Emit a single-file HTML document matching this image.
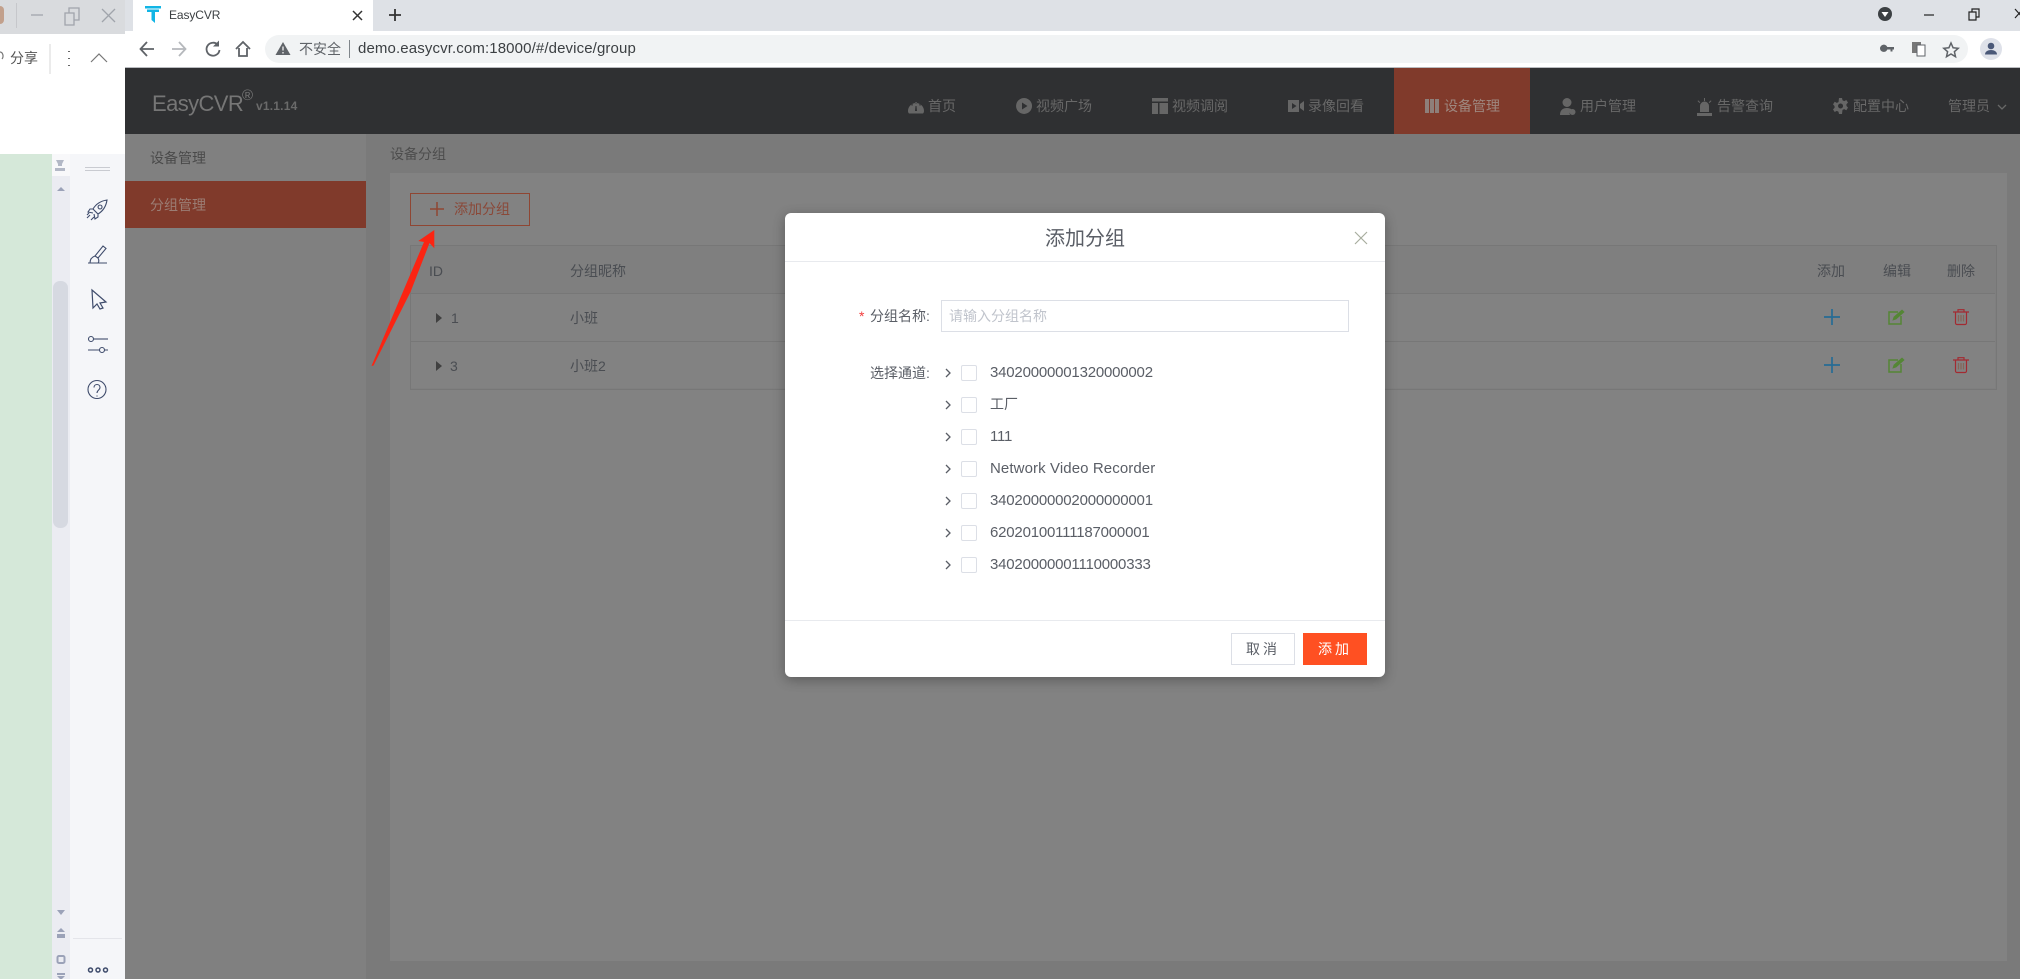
<!DOCTYPE html>
<html lang="zh"><head><meta charset="utf-8"><title>EasyCVR</title>
<style>
html,body{margin:0;padding:0;width:2020px;height:979px;overflow:hidden;background:#7a7a7a}
body{position:relative;font-family:"Liberation Sans","Noto Sans CJK SC",sans-serif;font-size:14px}
.b,.t,svg{position:absolute}
.t{white-space:nowrap;line-height:20px}
svg{overflow:visible}
.nav{color:#686868;font-size:14px;top:96px}
.ni{fill:#666;top:98px}
.tb{color:#4a4d52;font-size:14px}
.lab{color:#5a5e66;font-size:14px}
.item{color:#5a5e66;font-size:15px;left:990px;letter-spacing:-.2px}
.cb{position:absolute;left:961px;width:14px;height:14px;border:1px solid #dcdfe6;border-radius:2px;background:#fff}
.ch{left:944px;fill:none;stroke:#5a5e66;stroke-width:1.3}
</style></head><body>

<!-- left background window -->
<div class="b" style="left:0;top:0;width:125px;height:154px;background:#fff"></div>
<div class="b" style="left:0;top:0;width:133px;height:34px;background:#d9dbde;border-radius:0 0 8px 0"></div>
<div class="b" style="left:0;top:154px;width:52px;height:825px;background:#d5e8d9"></div>
<div class="b" style="left:52px;top:154px;width:18px;height:825px;background:#ebecf2"></div>
<div class="b" style="left:52px;top:154px;width:18px;height:22px;background:#f8f8fa"></div>
<div class="b" style="left:70px;top:154px;width:55px;height:825px;background:#f5f6f9"></div>
<div class="b" style="left:53px;top:281px;width:15px;height:247px;background:#d6d9e1;border-radius:7px"></div>
<div class="b" style="left:0;top:6px;width:4px;height:18px;background:#c2a08c;border-radius:0 4px 4px 0"></div>
<div class="b" style="left:16px;top:3px;width:1px;height:25px;background:#c6c7cb"></div>
<svg style="left:0;top:0" width="133" height="34" fill="none" stroke="#a0a4ab" stroke-width="1.3"><path d="M31 15h12M65 13h9v12h-9zM69 13V8h10v12h-5M102 9l13 13M115 9l-13 13"/></svg>
<div class="t" style="left:10px;top:48px;color:#555;font-size:14px">分享</div>
<svg style="left:0;top:48px" width="125" height="24" fill="none" stroke="#777" stroke-width="1.2"><path d="M0 4a3 4 0 0 1 2 7"/><path d="M50 -4v30" stroke="#ddd"/><path d="M69 3v1M69 10v1M69 17v1" stroke="#666" stroke-width="2"/><path d="M91 14l8-8 8 8"/></svg>

<!-- scroll strip and tool icons -->
<svg style="left:52px;top:154px" width="18" height="36"><path d="M4 6h8l-2 4h-4z M6 10h4v2H6z M3 14h10v3H3z" fill="#b3b8c6"/><path d="M5 37l4-4 4 4z" fill="#9ba2b8"/></svg>
<svg style="left:80px;top:166px" width="36" height="6" stroke="#c9cbd1" stroke-width="1"><path d="M5 1.500h25M5 4.500h25"/></svg>
<svg style="left:87px;top:199px" width="21" height="21" fill="none" stroke="#3f4c6c" stroke-width="1.100"><path d="M6 10c3-5 7-8 14-9-1 7-4 11-9 14zM6 10H3l-2 3 5 1M11 15v3l-3 2-1-5M13 6a2 2 0 1 0 .1 0M0 19l3-3M4 21l3-3M0 16l2-2"/></svg>
<svg style="left:88px;top:245px" width="19" height="19" fill="none" stroke="#3f4c6c" stroke-width="1.100"><path d="M7 11L15 1l3 2.500L10 13zM7 11c-3 1-5 3-5 7h8c1-1 1-3 0-5M0 18h19"/></svg>
<svg style="left:91px;top:289px" width="16" height="20" fill="none" stroke="#3f4c6c" stroke-width="1.200"><path d="M1 1l14 12-6 1 3 5-3 1-3-5-4 4z"/></svg>
<svg style="left:87px;top:335px" width="21" height="18" fill="none" stroke="#3f4c6c" stroke-width="1.100"><circle cx="4" cy="4" r="2.500"/><path d="M7 4h14"/><circle cx="15" cy="15" r="2.500"/><path d="M1 15h11M18 15h3"/></svg>
<svg style="left:87px;top:380px" width="20" height="20" fill="none" stroke="#3f4c6c" stroke-width="1.100"><circle cx="10" cy="9.500" r="9"/><path d="M7 7.500c0-4 6-4 6 0 0 2.500-3 2.500-3 5.500M10 15.500v1"/></svg>
<svg style="left:52px;top:905px" width="18" height="74" fill="#9ba2b8"><path d="M5 5h8l-4 5z M5 27l4-4 4 4z M5 29h8v4H5z"/><rect x="5.500" y="51" width="7" height="7" rx="1.500" fill="none" stroke="#9ba2b8" stroke-width="2"/><path d="M5 68h8v2H5z M5 71h8l-4 4z"/></svg>
<div class="b" style="left:73px;top:938px;width:49px;height:1px;background:#e4e5ea"></div>
<svg style="left:87px;top:966px" width="24" height="8" fill="none" stroke="#3f4c6c" stroke-width="1.500"><circle cx="3.500" cy="4" r="2"/><circle cx="11" cy="4" r="2"/><circle cx="18.500" cy="4" r="2"/></svg>

<!-- browser chrome -->
<div class="b" style="left:125px;top:0;width:1895px;height:31px;background:#dee1e6"></div>
<div class="b" style="left:133px;top:0;width:240px;height:31px;background:#fff"></div>
<div class="b" style="left:125px;top:31px;width:1895px;height:36px;background:#fff"></div>
<div class="b" style="left:125px;top:67px;width:1895px;height:1px;background:#b9bbbf"></div>
<svg style="left:145px;top:6px" width="16" height="17" fill="#12b5e5"><path d="M0 0h16v2.500H0zM2 3.500h4.500v2.500H2zM9.500 3.500H14v2.500H9.500zM6.500 3.500H10V17l-3.500-3z"/></svg>
<div class="t" style="left:169px;top:5px;font-size:12px;color:#3c4043;letter-spacing:-.1px">EasyCVR</div>
<svg style="left:352px;top:9px" width="60" height="14" fill="none" stroke="#333" stroke-width="1.500"><path d="M1 2l9 9M10 2l-9 9"/><path d="M37 6h12M43 0v12" stroke-width="1.800"/></svg>
<svg style="left:1877px;top:6px" width="143" height="18"><circle cx="8" cy="8" r="7" fill="#3c4043"/><path d="M4.500 6h7L8 11z" fill="#fff"/><path d="M47 9h10" stroke="#222" stroke-width="1.200"/><path d="M92 6h7v8h-7zM95 6V3h7v8h-3" fill="none" stroke="#222" stroke-width="1.200"/><path d="M138 3l8 9M146 3l-8 9" stroke="#222" stroke-width="1.200"/></svg>
<div class="b" style="left:265px;top:35px;width:1703px;height:28px;background:#f1f3f4;border-radius:14px"></div>
<svg style="left:139px;top:40px" width="116" height="18" fill="none" stroke="#5f6368" stroke-width="1.800"><path d="M15 9H2M8 2L1.500 9 8 16"/><path d="M33 9h13M40 2l6.500 7L40 16" stroke="#b5b8bc"/><path d="M79 5a6.500 6.500 0 1 0 1.500 5"/><path d="M80 .5v6h-6z" fill="#5f6368" stroke="none"/><path d="M97 9l7-7 7 7M100 8v8h8V8"/></svg>
<svg style="left:275px;top:41px" width="16" height="15"><path d="M8 1l7.500 13H.500z" fill="#5f6368"/><path d="M8 5.500v4M8 11v1.500" stroke="#fff" stroke-width="1.200"/></svg>
<div class="t" style="left:299px;top:39px;color:#5f6368;font-size:14px">不安全</div>
<div class="b" style="left:349px;top:40px;width:1px;height:18px;background:#80868b"></div>
<div class="t" style="left:358px;top:39px;color:#3c4043;font-size:15px;letter-spacing:.12px">demo.easycvr.com:18000/#/device/group</div>
<svg style="left:1880px;top:42px" width="84" height="15" fill="#5f6368"><path d="M0 6.500a3.800 3.800 0 0 1 7.300-1.500h6.700v2.500h-1.500v2h-2v-2H7.300A3.800 3.800 0 0 1 0 6.500z"/><rect x="32" y="0" width="9" height="11" fill="#777"/><rect x="37" y="3" width="8" height="11" fill="#fff" stroke="#5f6368"/><path d="M71 1l2.100 4.800 5.100.5-3.800 3.400 1.100 5L71 12l-4.500 2.700 1.100-5-3.800-3.400 5.100-.5z" fill="none" stroke="#5f6368" stroke-width="1.500"/></svg>
<div class="b" style="left:1980px;top:38px;width:22px;height:22px;border-radius:50%;background:#dee1e9"></div>
<svg style="left:1980px;top:38px" width="22" height="22" fill="#4a5878"><circle cx="11" cy="8" r="3.300"/><path d="M5 16.500c0-3 3-4.500 6-4.500s6 1.500 6 4.500z"/></svg>

<!-- dark header -->
<div class="b" style="left:125px;top:68px;width:1895px;height:66px;background:#2f3032"></div>
<div class="b" style="left:1394px;top:68px;width:136px;height:66px;background:#803a2b"></div>
<div class="t" style="left:152px;top:90px;font-size:22px;line-height:28px;color:#767676;letter-spacing:-.6px">EasyCVR</div>
<div class="t" style="left:242px;top:86px;font-size:15px;color:#767676">®</div>
<div class="t" style="left:256px;top:96px;font-size:12px;font-weight:bold;color:#6a6a6a;letter-spacing:.2px">v1.1.14</div>

<svg class="ni" style="left:908px" width="16" height="16"><path fill-rule="evenodd" d="M0 13a8 8 0 0 1 16 0c0 1-.4 2-1 2.500H1C.4 15 0 14 0 13zM8 4a.8.8 0 1 0 .1 0zM4 6a.8.8 0 1 0 .1 0zM12 6a.8.8 0 1 0 .1 0zM7.500 8h1l.5 5H7z"/></svg>
<div class="t nav" style="left:928px">首页</div>
<svg class="ni" style="left:1016px" width="16" height="16"><path fill-rule="evenodd" d="M8 0a8 8 0 1 0 .1 0zM6 4.500v7l5.500-3.500z"/></svg>
<div class="t nav" style="left:1036px">视频广场</div>
<svg class="ni" style="left:1152px" width="16" height="16"><path d="M0 0h16v3.500H0zM0 5h6v11H0zM7.500 5H16v11H7.500z"/></svg>
<div class="t nav" style="left:1172px">视频调阅</div>
<svg class="ni" style="left:1288px" width="16" height="16"><path fill-rule="evenodd" d="M0 2h11v12H0zM4 5v6l4.500-3zM12 6l4-3v10l-4-3z"/></svg>
<div class="t nav" style="left:1308px">录像回看</div>
<svg class="ni" style="left:1425px;fill:#8e7f7a" width="14" height="16"><path d="M0 1h4v14H0zM5 1h4v14H5zM10 1h4v14h-4z"/></svg>
<div class="t nav" style="left:1444px;color:#9e877f">设备管理</div>
<svg class="ni" style="left:1560px" width="16" height="18"><circle cx="7" cy="4.500" r="4.500"/><path d="M0 17c0-5 3-7 7-7 2 0 4 .5 5 2a3.500 3.500 0 0 0-2 5z"/><circle cx="12.500" cy="14" r="3"/></svg>
<div class="t nav" style="left:1580px">用户管理</div>
<svg class="ni" style="left:1696px" width="17" height="18"><path d="M4 8a4.500 4.500 0 0 1 9 0v6H4zM1 15h15v3H1zM8 0h1v3H8zM1.500 3l.8-.6 2 2-.8.6zM15.500 3l-.8-.6-2 2 .8.6z"/></svg>
<div class="t nav" style="left:1717px">告警查询</div>
<svg class="ni" style="left:1833px" width="15" height="16"><path fill-rule="evenodd" d="M6 0h3l.5 2.300 1.700.8L13.300 2l1.700 2.600-1.600 1.700.1 1.700 1.500 1.600-1.700 2.600-2.100-1.100-1.700.8L9 16H6l-.5-2.300-1.700-.8L1.700 14 0 11.400l1.600-1.700-.1-1.700L0 6.400 1.700 3.800l2.100 1.100 1.700-.8zM7.500 5.500a2.500 2.500 0 1 0 .1 0z"/></svg>
<div class="t nav" style="left:1853px">配置中心</div>
<div class="t nav" style="left:1948px">管理员</div>
<svg style="left:1997px;top:104px" width="10" height="6" fill="none" stroke="#686868" stroke-width="1.300"><path d="M1 1l4 4 4-4"/></svg>

<!-- sidebar and main -->
<div class="b" style="left:125px;top:134px;width:241px;height:845px;background:#808080"></div>
<div class="b" style="left:125px;top:181px;width:241px;height:47px;background:#803a2b"></div>
<div class="t" style="left:150px;top:148px;color:#4a4a4a">设备管理</div>
<div class="t" style="left:150px;top:195px;color:#9b7d74">分组管理</div>
<div class="t" style="left:390px;top:144px;color:#4d4d4d">设备分组</div>
<div class="b" style="left:390px;top:173px;width:1617px;height:788px;background:#828282"></div>

<div class="b" style="left:410px;top:193px;width:118px;height:31px;border:1px solid #8f4633"></div>
<svg style="left:430px;top:202px" width="14" height="14" stroke="#8f4633" stroke-width="1.500"><path d="M0 7h14M7 0v14"/></svg>
<div class="t" style="left:454px;top:199px;color:#8a4838">添加分组</div>

<div class="b" style="left:410px;top:245px;width:1585px;height:143px;border:1px solid #777;background:#7f7f7f"></div>
<div class="b" style="left:411px;top:294px;width:1584px;height:47px;background:#828282"></div>
<div class="b" style="left:411px;top:342px;width:1584px;height:46px;background:#828282"></div>
<div class="b" style="left:411px;top:293px;width:1584px;height:1px;background:#777"></div>
<div class="b" style="left:411px;top:341px;width:1584px;height:1px;background:#777"></div>
<div class="t tb" style="left:429px;top:261px">ID</div>
<div class="t tb" style="left:570px;top:261px">分组昵称</div>
<div class="t tb" style="left:1817px;top:261px">添加</div>
<div class="t tb" style="left:1883px;top:261px">编辑</div>
<div class="t tb" style="left:1947px;top:261px">删除</div>
<svg style="left:436px;top:313px" width="6" height="10" fill="#404040"><path d="M0 0l6 5-6 5z"/></svg>
<div class="t tb" style="left:451px;top:308px">1</div>
<div class="t tb" style="left:570px;top:308px">小班</div>
<svg style="left:436px;top:361px" width="6" height="10" fill="#404040"><path d="M0 0l6 5-6 5z"/></svg>
<div class="t tb" style="left:450px;top:356px">3</div>
<div class="t tb" style="left:570px;top:356px">小班2</div>

<svg style="left:1824px;top:309px" width="16" height="16" stroke="#266c95" stroke-width="1.700"><path d="M0 8h16M8 0v16"/></svg>
<svg style="left:1824px;top:357px" width="16" height="16" stroke="#266c95" stroke-width="1.700"><path d="M0 8h16M8 0v16"/></svg>
<svg style="left:1888px;top:309px" width="17" height="16" fill="none" stroke="#548635" stroke-width="1.500"><path d="M10 3H1v12h12V7"/><path d="M5 11l1-3 8-7 2 2-8 7z" fill="#548635" stroke-width=".8"/></svg>
<svg style="left:1888px;top:357px" width="17" height="16" fill="none" stroke="#548635" stroke-width="1.500"><path d="M10 3H1v12h12V7"/><path d="M5 11l1-3 8-7 2 2-8 7z" fill="#548635" stroke-width=".8"/></svg>
<svg style="left:1953px;top:309px" width="16" height="16" fill="none" stroke="#a32a31" stroke-width="1.200"><path d="M0 3h16M5 3V.7h6V3M2.500 3v11a1.500 1.500 0 0 0 1.500 1.500h8a1.500 1.500 0 0 0 1.500-1.500V3"/><path d="M5.500 6v6.500M8 6v6.500M10.500 6v6.500" stroke="#866557"/></svg>
<svg style="left:1953px;top:357px" width="16" height="16" fill="none" stroke="#a32a31" stroke-width="1.200"><path d="M0 3h16M5 3V.7h6V3M2.500 3v11a1.500 1.500 0 0 0 1.500 1.500h8a1.500 1.500 0 0 0 1.500-1.500V3"/><path d="M5.500 6v6.500M8 6v6.500M10.500 6v6.500" stroke="#866557"/></svg>

<!-- modal -->
<div class="b" style="left:785px;top:213px;width:600px;height:464px;background:#fff;border-radius:6px;box-shadow:0 3px 12px rgba(0,0,0,.3)"></div>
<div class="b" style="left:785px;top:261px;width:600px;height:1px;background:#e8eaee"></div>
<div class="t" style="left:1045px;top:227px;font-size:20px;line-height:24px;color:#5a5e66">添加分组</div>
<svg style="left:1355px;top:232px" width="12" height="12" stroke="#a8ad9f" stroke-width="1.200"><path d="M0 0l12 12M12 0L0 12"/></svg>
<div class="t" style="left:859px;top:306px;color:#f23c3c;font-size:14px">*</div>
<div class="t lab" style="left:870px;top:306px">分组名称:</div>
<div class="b" style="left:941px;top:300px;width:406px;height:30px;border:1px solid #dcdfe6"></div>
<div class="t" style="left:949px;top:306px;color:#c0c4cc">请输入分组名称</div>
<div class="t lab" style="left:870px;top:363px">选择通道:</div>

<svg class="ch" style="top:368px" width="8" height="10"><path d="M2 1l4 4-4 4"/></svg><div class="cb" style="top:365px"></div><div class="t item" style="top:363px">34020000001320000002</div>
<svg class="ch" style="top:400px" width="8" height="10"><path d="M2 1l4 4-4 4"/></svg><div class="cb" style="top:397px"></div><div class="t item" style="top:394px;font-size:14px;letter-spacing:0">工厂</div>
<svg class="ch" style="top:432px" width="8" height="10"><path d="M2 1l4 4-4 4"/></svg><div class="cb" style="top:429px"></div><div class="t item" style="top:427px">111</div>
<svg class="ch" style="top:464px" width="8" height="10"><path d="M2 1l4 4-4 4"/></svg><div class="cb" style="top:461px"></div><div class="t item" style="top:459px;letter-spacing:.1px">Network Video Recorder</div>
<svg class="ch" style="top:496px" width="8" height="10"><path d="M2 1l4 4-4 4"/></svg><div class="cb" style="top:493px"></div><div class="t item" style="top:491px">34020000002000000001</div>
<svg class="ch" style="top:528px" width="8" height="10"><path d="M2 1l4 4-4 4"/></svg><div class="cb" style="top:525px"></div><div class="t item" style="top:523px">62020100111187000001</div>
<svg class="ch" style="top:560px" width="8" height="10"><path d="M2 1l4 4-4 4"/></svg><div class="cb" style="top:557px"></div><div class="t item" style="top:555px">34020000001110000333</div>

<div class="b" style="left:785px;top:620px;width:600px;height:1px;background:#e8eaee"></div>
<div class="b" style="left:1231px;top:633px;width:62px;height:30px;border:1px solid #dcdfe6;text-align:center;line-height:30px;color:#5a5e66;font-size:14px;letter-spacing:3px">取消</div>
<div class="b" style="left:1303px;top:633px;width:64px;height:32px;background:#ff5022;text-align:center;line-height:32px;color:#fff;font-size:14px;letter-spacing:3px">添加</div>

<!-- red arrow annotation -->
<svg style="left:0;top:0" width="2020" height="979"><path d="M371.500 366L424 242L418.300 241L434.300 230L434.300 248.300L429.500 243L410.500 292L373.500 365.500Z" fill="#fb2412"/></svg>
</body></html>
